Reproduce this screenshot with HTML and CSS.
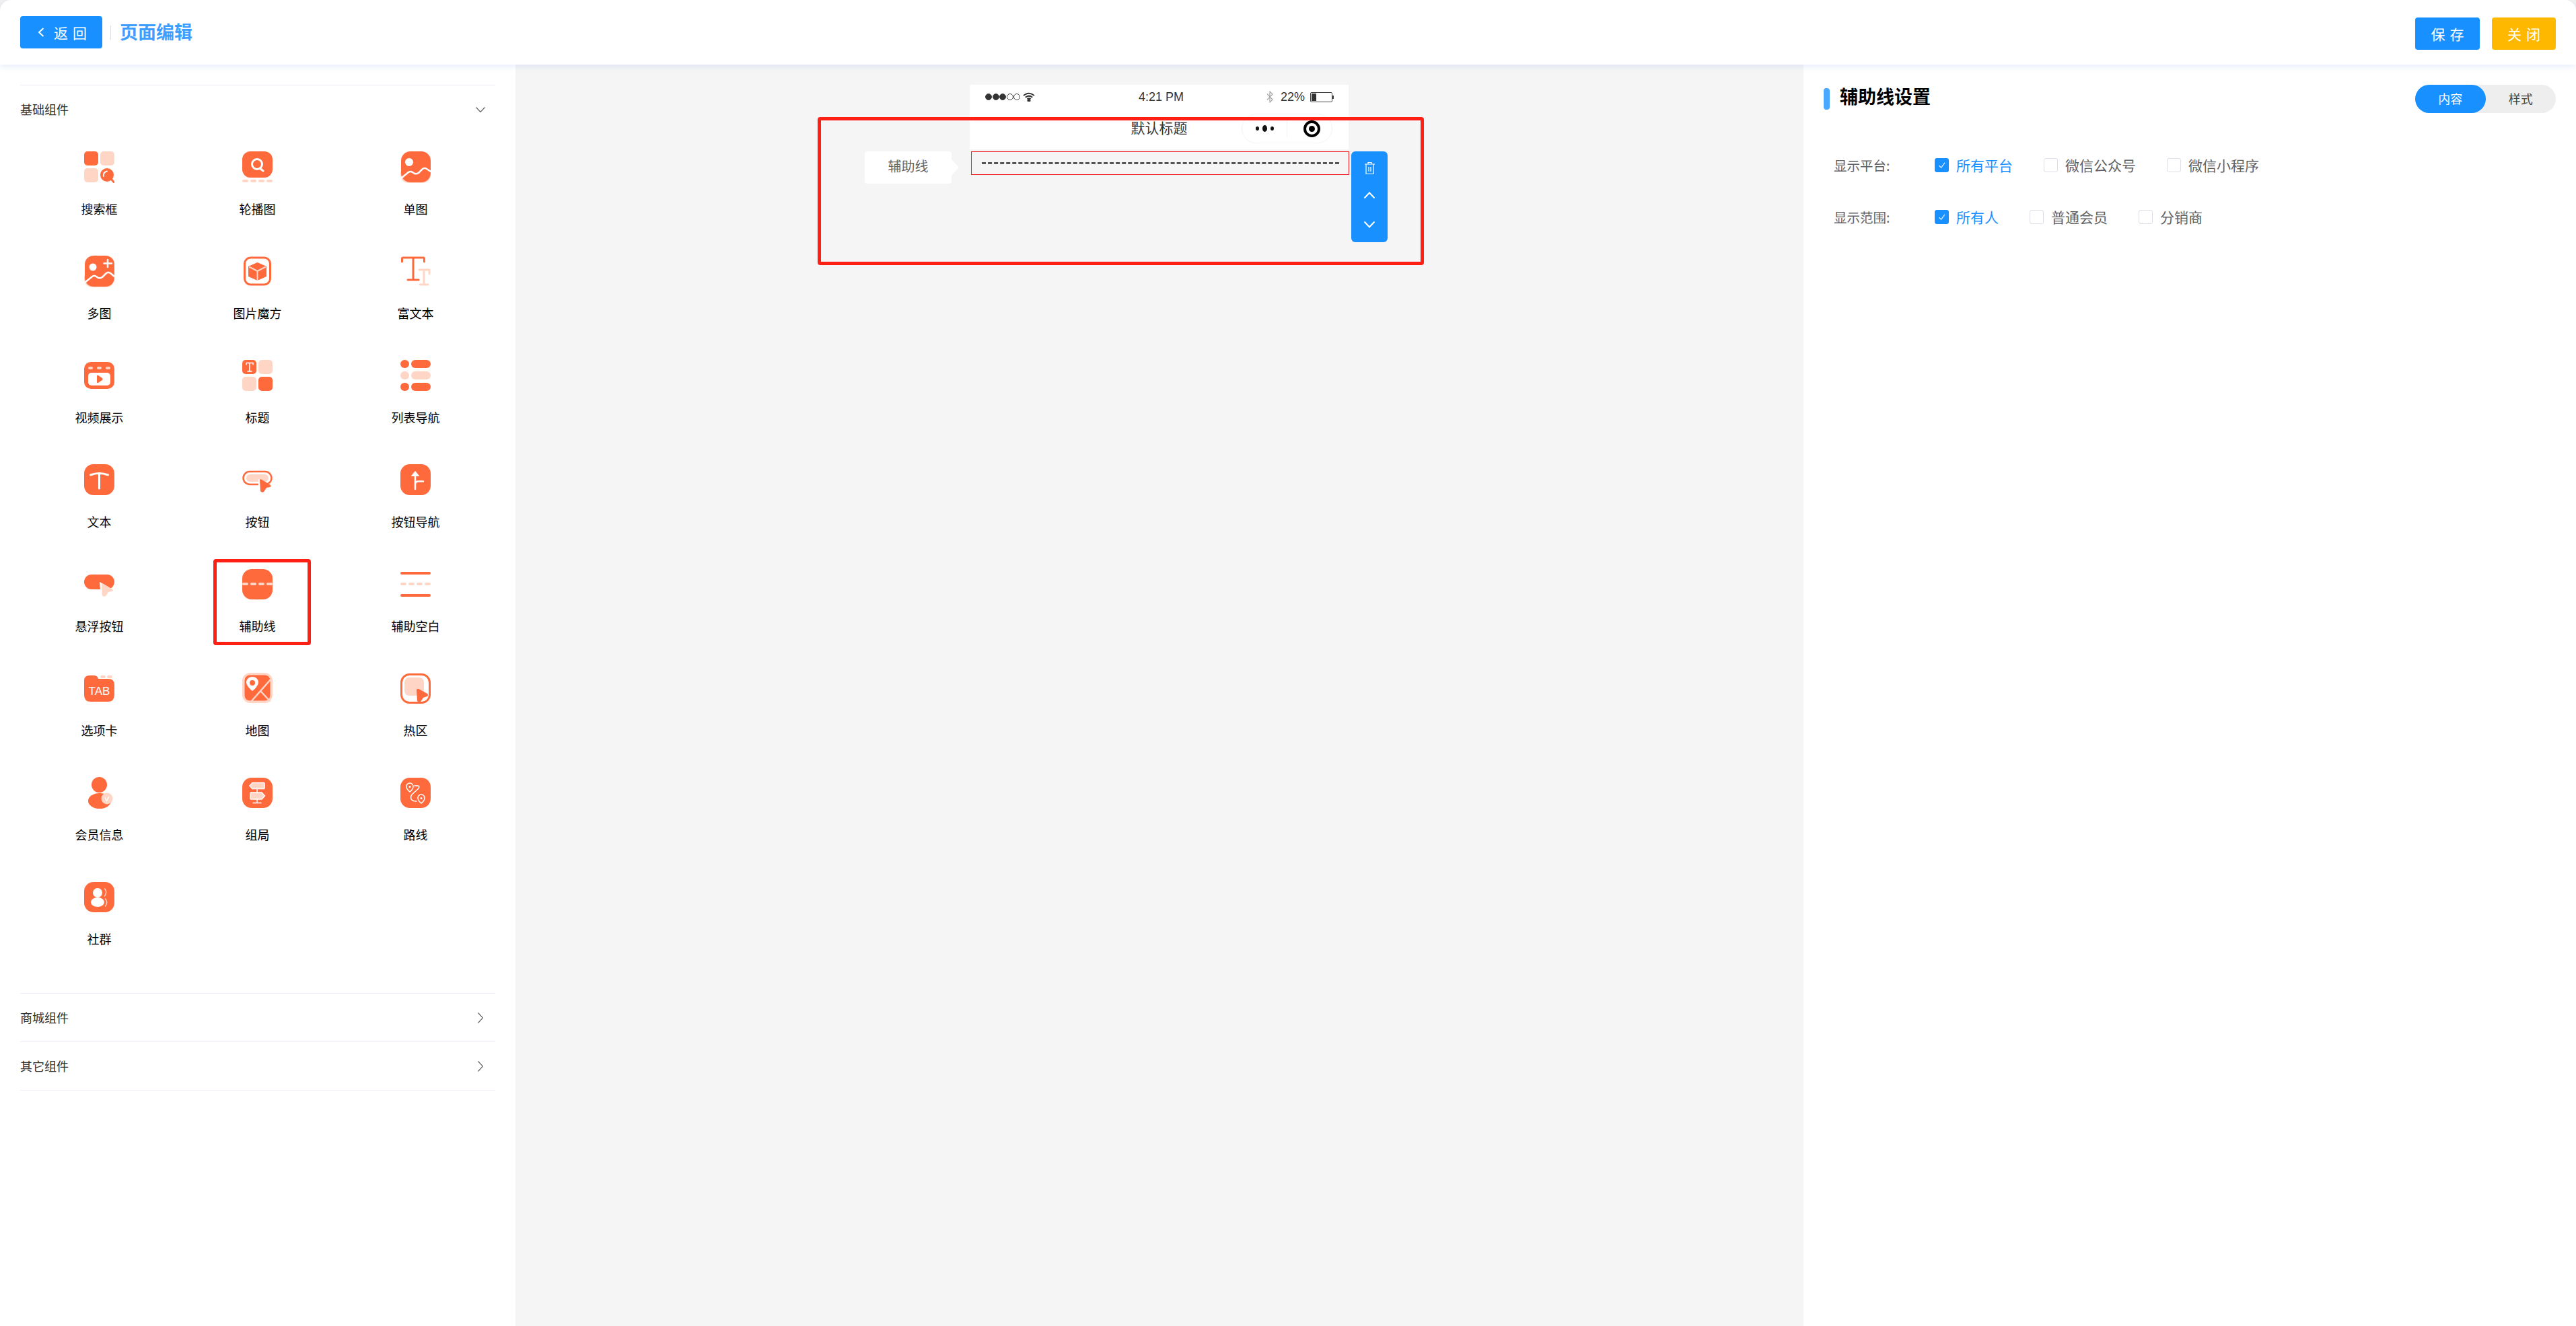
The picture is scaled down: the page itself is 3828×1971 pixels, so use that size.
FILE: index.html
```html
<!DOCTYPE html>
<html lang="zh-CN">
<head>
<meta charset="utf-8">
<title>页面编辑</title>
<link rel="stylesheet" href="styles.css">
</head>
<body>
<div class="app">
  <header class="topbar">
    <div class="topbar-left">
      <button class="btn btn-back">
        <svg class="back-chev" viewBox="0 0 10 14"><path d="M8.5 1 L2 7 L8.5 13"/></svg>
        <span>返回</span>
      </button>
      <span class="divider"></span>
      <h1 class="page-title">页面编辑</h1>
    </div>
    <div class="topbar-right">
      <button class="btn btn-save">保存</button>
      <button class="btn btn-close">关闭</button>
    </div>
  </header>

  <main class="workspace">
    <aside class="sidebar">
      <section class="group group-open">
        <div class="group-head">
          <span>基础组件</span>
          <svg class="chev-down" viewBox="0 0 14 8"><path d="M0.5 0.5 L7 7.5 L13.5 0.5"/></svg>
        </div>
        <div class="grid">
          <div class="cell">
            <svg class="ico" viewBox="0 0 45 47">
              <rect class="c" x="0" y="0" width="21" height="21" rx="5"/>
              <rect class="l" x="24" y="0" width="21" height="21" rx="5"/>
              <rect class="l" x="0" y="25" width="21" height="21" rx="5"/>
              <circle class="c" cx="34" cy="35" r="10"/>
              <path class="sc" d="M40 41 L44.5 46"/>
              <path class="sw w2" d="M29 37 Q28 31 34 29.5"/>
            </svg>
            <span class="label">搜索框</span>
          </div>
          <div class="cell">
            <svg class="ico" viewBox="0 0 45 47">
              <rect class="c" x="0" y="0" width="45" height="39" rx="12"/>
              <rect class="l" x="0" y="42" width="9" height="4" rx="2"/>
              <rect class="l" x="12" y="42" width="9" height="4" rx="2"/>
              <rect class="l" x="24" y="42" width="9" height="4" rx="2"/>
              <rect class="l" x="36" y="42" width="9" height="4" rx="2"/>
              <circle class="sw w3" cx="22" cy="19" r="7.5"/>
              <path class="sw w3" d="M26 25 L31 29"/>
            </svg>
            <span class="label">轮播图</span>
          </div>
          <div class="cell">
            <svg class="ico" viewBox="0 0 45 47">
              <path class="l" d="M0 30 V33 Q0 47 14 47 H31 Q45 47 45 33 V30Z"/>
              <rect class="c" x="1" y="0" width="44" height="46" rx="14"/>
              <circle class="w" cx="13" cy="16" r="6"/>
              <path class="sw w25" d="M1 40 L12 31 Q15 29 18 31 L21 33 Q24 34 27 32 L33 26 Q36 24 39 26 L45 30"/>
            </svg>
            <span class="label">单图</span>
          </div>

          <div class="cell">
            <svg class="ico" viewBox="0 0 45 47">
              <path class="l" d="M0 30 V33 Q0 47 14 47 H31 Q45 47 45 33 V30Z"/>
              <rect class="c" x="1" y="0" width="44" height="46" rx="13"/>
              <circle class="w" cx="13" cy="17" r="5.5"/>
              <path class="sw w25" d="M35 6 V17 M29.500 11.500 H41"/>
              <path class="sw w25" d="M1 40 L12 31 Q15 29 18 31 L21 33 Q24 34 27 32 L33 26 Q36 24 39 26 L45 31"/>
            </svg>
            <span class="label">多图</span>
          </div>
          <div class="cell">
            <svg class="ico" viewBox="0 0 45 47">
              <rect class="sc" x="3.500" y="3" width="38" height="40" rx="9"/>
              <path class="c" d="M22.500 10 L36 16 V31 L22.500 37 L9 31 V16Z"/>
              <path class="sl w2" d="M11 17 L22.500 23 L34 17 M22.500 23 V36"/>
            </svg>
            <span class="label">图片魔方</span>
          </div>
          <div class="cell">
            <svg class="ico" viewBox="0 0 45 47">
              <path class="sc" d="M2.500 9 V4.500 Q2.500 3 4 3 H34 Q35.500 3 35.500 4.500 V9 M19 3 V36 M11 36 H27"/>
              <path class="sl" d="M28 21 H43 V27 M35 21 V43 M29 43 H41"/>
            </svg>
            <span class="label">富文本</span>
          </div>

          <div class="cell">
            <svg class="ico" viewBox="0 0 45 47">
              <rect class="c" x="0" y="3" width="45" height="40" rx="10"/>
              <rect class="l" x="6" y="10" width="7" height="4" rx="2"/>
              <rect class="l" x="19" y="10" width="7" height="4" rx="2"/>
              <rect class="l" x="32" y="10" width="7" height="4" rx="2"/>
              <rect class="w" x="6" y="19" width="33" height="19" rx="5"/>
              <path class="c" d="M19 24 Q19 22 21 23 L27 27 Q28.500 28.500 27 30 L21 34 Q19 35 19 33Z"/>
            </svg>
            <span class="label">视频展示</span>
          </div>
          <div class="cell">
            <svg class="ico" viewBox="0 0 45 47">
              <rect class="c" x="0" y="0" width="21" height="21" rx="5"/>
              <rect class="l" x="24" y="0" width="21" height="21" rx="5"/>
              <rect class="l" x="0" y="25" width="21" height="21" rx="5"/>
              <rect class="c" x="24" y="25" width="21" height="21" rx="5"/>
              <path class="sw w15" d="M6 7 V4.500 H16 V7 M11 4.500 V17 M8 17 H14"/>
            </svg>
            <span class="label">标题</span>
          </div>
          <div class="cell">
            <svg class="ico" viewBox="0 0 45 47">
              <rect class="c" x="0" y="0" width="13" height="12" rx="6"/>
              <rect class="c" x="16" y="0" width="29" height="12" rx="6"/>
              <rect class="l" x="0" y="17" width="13" height="12" rx="6"/>
              <rect class="l" x="16" y="17" width="29" height="12" rx="6"/>
              <rect class="c" x="0" y="34" width="13" height="12" rx="6"/>
              <rect class="c" x="16" y="34" width="29" height="12" rx="6"/>
            </svg>
            <span class="label">列表导航</span>
          </div>

          <div class="cell">
            <svg class="ico" viewBox="0 0 45 47">
              <rect class="c" x="0" y="0" width="45" height="46" rx="14"/>
              <path class="sw w3" d="M9.500 16 Q22.500 11 35.500 16 M22.500 14 V36"/>
            </svg>
            <span class="label">文本</span>
          </div>
          <div class="cell">
            <svg class="ico" viewBox="0 0 45 47">
              <rect class="sc w25" x="1.500" y="11" width="42" height="19" rx="9.500"/>
              <rect class="l" x="6" y="15" width="33" height="11" rx="5.500"/>
              <path class="w" d="M24 22 L45 32 L40 37 L28 43 L24 36Z"/>
              <path class="c" d="M26 24 Q26 21 29 23 L42 31 Q44 33 41 34 L36 35 L32 41 Q29 43 27 40Z"/>
            </svg>
            <span class="label">按钮</span>
          </div>
          <div class="cell">
            <svg class="ico" viewBox="0 0 45 47">
              <rect class="c" x="0" y="0" width="45" height="46" rx="14"/>
              <path class="w" d="M22 10 L28.500 18 H15.500Z"/>
              <path class="sw w25" d="M22 16 V37 M22 30 Q22 25.500 27 25.500 H34"/>
            </svg>
            <span class="label">按钮导航</span>
          </div>

          <div class="cell">
            <svg class="ico" viewBox="0 0 45 47">
              <rect class="c" x="0" y="9" width="45" height="22" rx="11"/>
              <path class="w" d="M23 20 L46 33 L40 36 L30 45 L25 42Z"/>
              <path class="l" d="M26 24 Q26 21 29 23 L42 31 Q44 33 41 34 L36 35 L32 41 Q29 43 27 40Z"/>
            </svg>
            <span class="label">悬浮按钮</span>
          </div>
          <div class="cell">
            <svg class="ico" viewBox="0 0 45 47">
              <rect class="c" x="0" y="1" width="45" height="45" rx="14"/>
              <rect class="l" x="0" y="21" width="9" height="4" rx="2"/>
              <rect class="l" x="12" y="21" width="9" height="4" rx="2"/>
              <rect class="l" x="24" y="21" width="9" height="4" rx="2"/>
              <rect class="l" x="36" y="21" width="9" height="4" rx="2"/>
            </svg>
            <span class="label">辅助线</span>
            <div class="mark-cell"></div>
          </div>
          <div class="cell">
            <svg class="ico" viewBox="0 0 45 47">
              <rect class="c" x="0" y="5" width="45" height="4" rx="2"/>
              <rect class="l" x="0" y="21" width="9" height="4" rx="2"/>
              <rect class="l" x="12" y="21" width="9" height="4" rx="2"/>
              <rect class="l" x="24" y="21" width="9" height="4" rx="2"/>
              <rect class="l" x="36" y="21" width="9" height="4" rx="2"/>
              <rect class="c" x="0" y="38" width="45" height="4" rx="2"/>
            </svg>
            <span class="label">辅助空白</span>
          </div>

          <div class="cell">
            <svg class="ico" viewBox="0 0 45 47">
              <path class="c" d="M0 12 Q0 4 8 4 H14 Q20 4 21 9 H36 Q45 9 45 18 V33 Q45 43 35 43 H10 Q0 43 0 33Z"/>
              <rect class="l" x="24" y="4" width="8" height="4" rx="2"/>
              <rect class="l" x="34" y="4" width="8" height="4" rx="2"/>
              <text class="tab-text" x="22.500" y="33">TAB</text>
            </svg>
            <span class="label">选项卡</span>
          </div>
          <div class="cell">
            <svg class="ico" viewBox="0 0 45 47">
              <rect class="l" x="0" y="0" width="45" height="45" rx="12"/>
              <rect class="c" x="3.500" y="3.500" width="38" height="38" rx="8"/>
              <path class="sl w25" d="M43 9 L13 43 M27 27 L41 42"/>
              <path class="w" d="M15 6 C8.500 6 6 11 6 14 C6 19 12 25 15 27 C18 25 24 19 24 14 C24 11 21.500 6 15 6Z"/>
              <circle class="c" cx="15" cy="15" r="4"/>
            </svg>
            <span class="label">地图</span>
          </div>
          <div class="cell">
            <svg class="ico" viewBox="0 0 45 47">
              <rect class="sc" x="1.500" y="2.500" width="42" height="42" rx="12"/>
              <rect class="l" x="6" y="7" width="29" height="27" rx="7"/>
              <path class="c" d="M24 26 Q24 23 27 24 L40 31 Q42 33 40 35 L34 37 L30 43 Q27 44 25 42Z"/>
            </svg>
            <span class="label">热区</span>
          </div>

          <div class="cell">
            <svg class="ico" viewBox="0 0 45 47">
              <ellipse class="c" cx="22.500" cy="11.500" rx="11.500" ry="11.500"/>
              <ellipse class="c" cx="23" cy="35.500" rx="17" ry="11.500"/>
              <circle class="l" cx="34" cy="32" r="8.500"/>
              <path class="sw w15" d="M31.500 31 L33.500 35.500 L36.500 29.500"/>
            </svg>
            <span class="label">会员信息</span>
          </div>
          <div class="cell">
            <svg class="ico" viewBox="0 0 45 47">
              <rect class="c" x="0" y="1" width="45" height="45" rx="14"/>
              <path class="l stroke-w" d="M15 8.500 H32 Q33 8.500 33 9.500 V16.500 Q33 17.500 32 17.500 H15 L11 13Z"/>
              <path class="l stroke-w" d="M13 23 H29 L33.500 28 L29 33 H13 Q12 33 12 32 V24 Q12 23 13 23Z"/>
              <path class="sw w15" d="M22 18 V23 M22 33 V38 M16 38.500 H28"/>
            </svg>
            <span class="label">组局</span>
          </div>
          <div class="cell">
            <svg class="ico" viewBox="0 0 45 47">
              <rect class="c" x="0" y="1" width="45" height="45" rx="14"/>
              <path class="sw w15" d="M14 9 C10.500 9 9 12 9 14 C9 17 12 20.500 14 22 C16 20.500 19 17 19 14 C19 12 17.500 9 14 9Z"/>
              <circle class="w" cx="14" cy="14.500" r="1.500"/>
              <path class="sw w15" d="M31 26 C27.500 26 26 29 26 31 C26 34 29 37.500 31 39 C33 37.500 36 34 36 31 C36 29 34.500 26 31 26Z"/>
              <circle class="w" cx="31" cy="31.500" r="1.500"/>
              <path class="sw w15" d="M21 13 H26 Q29 13 27 17 L17 26 Q14 31 17 34 Q19 36 24 36"/>
            </svg>
            <span class="label">路线</span>
          </div>

          <div class="cell">
            <svg class="ico" viewBox="0 0 45 47">
              <rect class="c" x="0" y="1" width="45" height="45" rx="14"/>
              <circle class="w" cx="20" cy="17" r="7"/>
              <ellipse class="w" cx="20" cy="31" rx="10" ry="7"/>
              <path class="sl w15" d="M30.500 11 Q35 16 30.500 22"/>
              <path class="sl w15" d="M31.500 26 Q36 31.500 31.500 37"/>
            </svg>
            <span class="label">社群</span>
          </div>
        </div>
      </section>

      <section class="group">
        <div class="group-head">
          <span>商城组件</span>
          <svg class="chev-right" viewBox="0 0 8 16"><path d="M0.500 0.500 L7.500 8 L0.500 15.500"/></svg>
        </div>
      </section>
      <section class="group group-last">
        <div class="group-head">
          <span>其它组件</span>
          <svg class="chev-right" viewBox="0 0 8 16"><path d="M0.500 0.500 L7.500 8 L0.500 15.500"/></svg>
        </div>
      </section>
    </aside>

    <section class="canvas">
      <div class="phone">
        <div class="phone-head">
          <div class="status">
            <div class="status-left">
              <span class="signal"><i class="on"></i><i class="on"></i><i class="on"></i><i></i><i></i></span>
              <svg class="wifi" viewBox="0 0 18 14">
                <path d="M1 5 Q9 -1.500 17 5 M3.800 7.800 Q9 3.500 14.200 7.800 M6.400 10.300 Q9 8.200 11.600 10.300"/>
                <circle cx="9" cy="12.500" r="1.500"/>
              </svg>
            </div>
            <span class="time">4:21 PM</span>
            <div class="status-right">
              <svg class="bt" viewBox="0 0 12 18"><path d="M2 4.500 L10 13 L6 17 V1 L10 5 L2 13.500"/></svg>
              <span class="pct">22%</span>
              <span class="battery"><span class="battery-level"></span></span>
            </div>
          </div>
          <div class="nav">
            <span class="nav-title">默认标题</span>
            <div class="capsule">
              <span class="cap-dots"><i></i><i class="big"></i><i></i></span>
              <span class="cap-sep"></span>
              <span class="cap-target"><i></i></span>
            </div>
          </div>
        </div>
        <div class="selected-row">
          <div class="dash"></div>
          <div class="row-tag">辅助线</div>
          <div class="row-actions">
            <svg class="act act-trash" viewBox="0 0 17 20">
              <path d="M1 4 H16 M6 4 V1.500 H11 V4 M3 4 V18.500 H14 V4 M7 8 V15 M10 8 V15"/>
            </svg>
            <svg class="act act-chev act-up" viewBox="0 0 18 11"><path d="M1.500 9.500 L9 1.500 L16.500 9.500"/></svg>
            <svg class="act act-chev" viewBox="0 0 18 11"><path d="M1.500 1.500 L9 9.500 L16.500 1.500"/></svg>
          </div>
        </div>
        <div class="mark-canvas"></div>
      </div>
    </section>

    <aside class="panel">
      <div class="panel-head">
        <div class="panel-title-wrap">
          <span class="panel-bar"></span>
          <h2 class="panel-title">辅助线设置</h2>
        </div>
        <div class="switch">
          <span class="switch-item active">内容</span>
          <span class="switch-item">样式</span>
        </div>
      </div>
      <div class="form-row first">
        <span class="form-label">显示平台:</span>
        <div class="options">
          <label class="opt checked"><span class="box"><svg viewBox="0 0 21 21"><path d="M6 11 L9.500 14.500 L15.500 6.500"/></svg></span>所有平台</label>
          <label class="opt"><span class="box"></span>微信公众号</label>
          <label class="opt"><span class="box"></span>微信小程序</label>
        </div>
      </div>
      <div class="form-row">
        <span class="form-label">显示范围:</span>
        <div class="options">
          <label class="opt checked"><span class="box"><svg viewBox="0 0 21 21"><path d="M6 11 L9.500 14.500 L15.500 6.500"/></svg></span>所有人</label>
          <label class="opt"><span class="box"></span>普通会员</label>
          <label class="opt"><span class="box"></span>分销商</label>
        </div>
      </div>
    </aside>
  </main>
</div>
</body>
</html>
```

FILE: styles.css
```css
* { box-sizing: border-box; }
html, body { margin: 0; height: 100%; overflow: hidden; background: #f0f0f0; }
body { font-family: "Noto Sans CJK SC", "Liberation Sans", sans-serif; color: #303133; }
.app { display: flex; flex-direction: column; height: 1971px; width: 3828px; }

/* top bar */
.topbar {
  position: relative; z-index: 3;
  height: 96px; flex: none;
  display: flex; align-items: center; justify-content: space-between;
  padding: 0 30px;
  background: #fff;
  border-radius: 16px 16px 0 0;
  box-shadow: 0 3px 10px rgba(90, 125, 230, .14);
}
.topbar-left, .topbar-right { display: flex; align-items: center; }
.btn {
  border: 0; padding: 0; height: 48px; border-radius: 4px; color: #fff;
  font-family: inherit; font-size: 21px; line-height: 46px; letter-spacing: 7px;
  display: flex; align-items: center; justify-content: center;
}
.btn-back { width: 122px; background: #1890ff; justify-content: flex-start; padding-left: 26px; }
.back-chev { width: 10px; height: 14px; margin-right: 14px; fill: none; stroke: #fff; stroke-width: 2; }
.divider { width: 1px; height: 21px; background: #dcdfe6; margin: 0 13px 0 12px; }
.page-title { margin: 0 0 2px; font-size: 27px; font-weight: 700; color: #3d9eff; line-height: 46px; }
.topbar-right { padding-top: 4px; }
.btn-save { width: 96px; background: #1890ff; margin-right: 18px; padding-left: 7px; }
.btn-close { width: 95px; background: #ffb800; padding-left: 7px; }

.workspace { flex: 1; display: flex; min-height: 0; }

/* left sidebar */
.sidebar { width: 766px; flex: none; background: #fff; padding: 30px 30px 0; }
.group { border-top: 1px solid #ebeef5; }
.group-last { border-bottom: 1px solid #ebeef5; }
.group-head {
  height: 71px; display: flex; align-items: center; justify-content: space-between;
  font-size: 18px; color: #303133;
}
.group-head span { margin-bottom: 2px; }
.chev-down { width: 14px; height: 8px; margin-right: 15px; fill: none; stroke: #606266; stroke-width: 1.2; }
.chev-right { width: 8px; height: 16px; margin-right: 18px; fill: none; stroke: #606266; stroke-width: 1.2; }
.grid {
  display: grid; grid-template-columns: repeat(3, 235px); grid-auto-rows: 155px;
  padding: 27px 0 11px;
}
.cell { position: relative; display: flex; flex-direction: column; align-items: center; }
.ico { width: 45px; height: 47px; display: block; flex: none; }
.label { margin-top: 26px; font-size: 18px; line-height: 24px; color: #000; }
.mark-cell {
  position: absolute; left: 52px; top: -14px; width: 145px; height: 128px;
  border: 5px solid #ff2015; border-radius: 4px;
}

/* icon paint */
.c { fill: #fe6a3c; }
.l { fill: #ffd6c6; }
.w { fill: #fff; }
.sc, .sl, .sw { fill: none; stroke-linecap: round; stroke-linejoin: round; stroke-width: 3; }
.sc { stroke: #fe6a3c; }
.sl { stroke: #ffd6c6; }
.sw { stroke: #fff; }
.w15 { stroke-width: 1.5; }
.w2 { stroke-width: 2; }
.w25 { stroke-width: 2.5; }
.w3 { stroke-width: 3; }
.stroke-w { stroke: #fff; stroke-width: 1.5; }
.tab-text { font-family: "Liberation Sans", sans-serif; font-size: 17px; fill: #fff; text-anchor: middle; }

/* canvas */
.canvas { flex: 1; background: #f5f5f5; display: flex; justify-content: center; padding-top: 30px; }
.phone { position: relative; width: 563px; margin-left: -1px; }
.phone-head { height: 96px; background: #fff; }
.status {
  height: 36px; padding: 0 24px 0 23px;
  display: grid; grid-template-columns: 1fr auto 1fr; align-items: center;
  font-family: "Liberation Sans", sans-serif; font-size: 18px; color: #333;
}
.status-left, .status-right { display: flex; align-items: center; }
.status-right { justify-content: flex-end; }
.signal { display: flex; gap: 0; }
.signal i { width: 10px; height: 10px; border-radius: 50%; border: 1px solid #444; margin-right: .500px; }
.signal i.on { background: #333; }
.wifi { width: 18px; height: 14px; margin-left: 3px; fill: #333; stroke: #333; stroke-width: 2; }
.wifi path { fill: none; }
.time { margin-left: 7px; }
.bt { width: 12px; height: 18px; margin-right: 10px; fill: none; stroke: #aaa; stroke-width: 1.300; }
.pct { margin-right: 8px; }
.battery {
  position: relative; display: block; width: 33px; height: 15px;
  border: 1px solid #444; border-radius: 2px; padding: 1px;
}
.battery::after {
  content: ""; position: absolute; right: -3px; top: 4px; width: 2px; height: 5px; background: #444;
}
.battery-level { display: block; width: 7px; height: 100%; background: #333; }
.nav { position: relative; height: 60px; display: flex; align-items: center; justify-content: center; }
.nav-title { font-size: 21px; color: #333; line-height: 30px; margin-bottom: 6px; }
.capsule {
  position: absolute; right: 24px; top: 7px; width: 135px; height: 44px;
  border: 1px solid #f4f4f4; border-radius: 22px;
  display: flex; align-items: center;
}
.cap-dots { width: 66px; display: flex; align-items: center; justify-content: center; gap: 5px; }
.cap-dots i { width: 5px; height: 6px; border-radius: 50%; background: #111; }
.cap-dots i.big { width: 7px; height: 10px; }
.cap-sep { width: 1px; height: 26px; background: #f0f0f0; }
.cap-target {
  width: 25px; height: 25px; margin-left: 24px; border-radius: 50%;
  border: 4px solid #000; display: flex; align-items: center; justify-content: center;
}
.cap-target i { width: 9px; height: 9px; border-radius: 50%; background: #000; }

.selected-row {
  position: relative; height: 35px; margin: 3px -1px 0 2px;
  border: 1px solid #ee1a1a; padding: 15px 14px 0 15px;
}
.dash { border-top: 3px dashed #555; }
.row-tag {
  position: absolute; left: -159px; top: -1px; width: 129px; height: 48px;
  background: #fff; border-radius: 4px; font-size: 20px; line-height: 44px; text-align: center; color: #666;
}
.row-tag::after {
  content: ""; position: absolute; left: 129px; top: 12px;
  border-left: 11px solid #fff; border-top: 12px solid transparent; border-bottom: 12px solid transparent;
}
.row-actions {
  position: absolute; left: 564px; top: -1px; width: 54px; height: 135px;
  background: #1890ff; border-radius: 6px; display: flex; flex-direction: column; align-items: center;
  padding-top: 15px;
}
.act { fill: none; stroke: #fff; display: block; }
.act-trash { width: 17px; height: 20px; stroke-width: 1.200; }
.act-chev { width: 18px; height: 11px; stroke-width: 2; margin-top: 32px; }
.act-up { margin-top: 25px; }
.mark-canvas {
  position: absolute; left: -226px; top: 48px; width: 901px; height: 220px;
  border: 5px solid #ff2015; border-radius: 4px;
}

/* right panel */
.panel { width: 1148px; flex: none; background: #fff; padding: 30px; }
.panel-head { display: flex; align-items: center; justify-content: space-between; height: 42px; }
.panel-title-wrap { display: flex; align-items: center; gap: 15px; }
.panel-bar { width: 9px; height: 32px; border-radius: 4px; background: #4aa8ff; }
.panel-title { margin: 0 0 8px; font-size: 27px; font-weight: 700; line-height: 36px; color: #000; }
.switch { width: 209px; height: 42px; background: #eee; border-radius: 21px; display: flex; font-size: 18px; }
.switch-item { width: 105px; text-align: center; line-height: 40px; color: #444; }
.switch-item.active { background: #1890ff; color: #fff; border-radius: 21px; }
.form-row {
  display: flex; align-items: center; height: 42px; margin-top: 35px; padding-left: 15px;
}
.form-row.first { margin-top: 56px; }
.form-label { width: 150px; font-size: 19.500px; color: #606266; }
.options { display: flex; gap: 46px; font-size: 21px; color: #606266; }
.opt { display: flex; align-items: center; gap: 11px; line-height: 30px; }
.box { width: 21px; height: 21px; border: 1px solid #dcdfe6; border-radius: 3px; background: #fff; display: block; }
.opt.checked { color: #1890ff; }
.opt.checked .box { background: #1890ff; border-color: #1890ff; }
.box svg { display: block; width: 19px; height: 19px; fill: none; stroke: #cfe6ff; stroke-width: 1.500; }
```
